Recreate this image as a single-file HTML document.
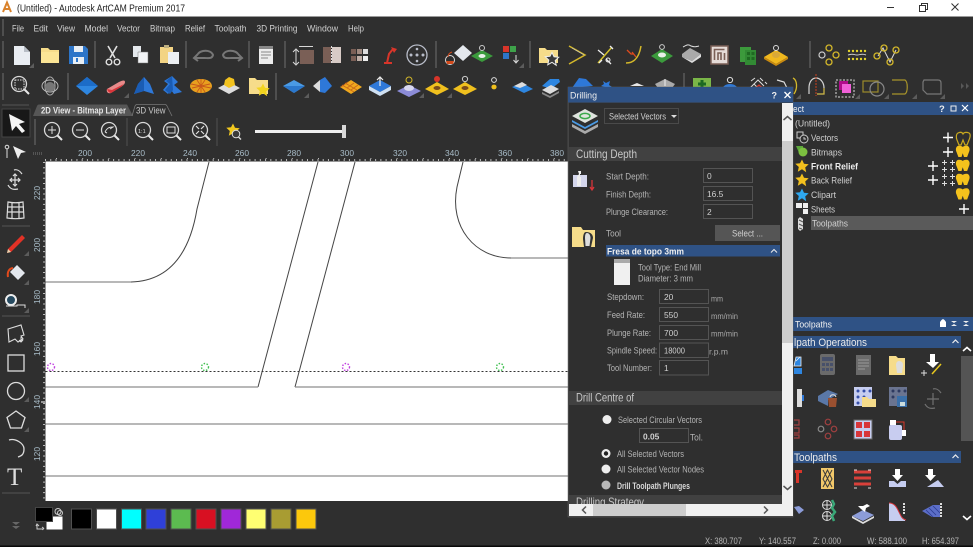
<!DOCTYPE html>
<html><head><meta charset="utf-8"><style>
html,body{margin:0;padding:0;background:#2f2f2f;overflow:hidden;width:973px;height:547px}
svg{display:block}
text{font-family:"Liberation Sans",sans-serif;font-size:9.4px;fill:#c4c4c4}
.m{font-size:9.4px;fill:#d0d0d0}
.l{font-size:9.4px;fill:#b4b4b4}
.n{font-size:8.4px;fill:#d0d0d0}
.u{font-size:8.4px;fill:#a8a8a8}
.h{font-size:12px;fill:#c8c8c8}
.w{fill:#f0f0f0}
.b{font-weight:bold}
.r{font-size:8.4px;fill:#a8bcc8}
.sep{stroke:#5a5a5a;stroke-width:1.5}
</style></head><body>
<svg width="973" height="547" viewBox="0 0 973 547" xmlns="http://www.w3.org/2000/svg">
<defs>
<g id="mag"><circle cx="-1" cy="-1" r="7.5" fill="none" stroke="#d8d8d8" stroke-width="1.300"/><path d="M4.500 4.500L9 9" stroke="#e8e8e8" stroke-width="2"/></g>
<path id="cor" d="M0 0l5 0 0 -5z" fill="#5c5c5c"/>
<g id="bulb"><path transform="scale(1.250)" d="M-4 -5c-2.500 0-3 3-2 5l1.500 4h2.500l1-3 1 3h2.500l1.500-4c1-2 .5-5-2-5-1.500 0-2.500 .5-3 1-.5-.5-1.500-1-3-1z" fill="#f4c21c"/></g>
<path id="star" d="M0-6.500l2 4.300 4.700 .5-3.500 3.200 1 4.700L0 3.300-4.200 5.700l1-4.700-3.500-3.200 4.700-.5z"/>
<path id="plus" d="M-5 0H5M0-5V5" stroke="#fff" stroke-width="1.400" fill="none"/>
<path id="pp" d="M-2.500 0H2.500M0-2.500V2.500" stroke="#ddd" stroke-width="1" fill="none"/>
<g id="pp4"><use href="#pp" x="-4" y="-3.500"/><use href="#pp" x="4" y="-3.500"/><use href="#pp" x="-4" y="3.500"/><use href="#pp" x="4" y="3.500"/></g>
<g id="ring"><circle r="3" fill="none" stroke="#d4b82a" stroke-width="1.300"/></g>
</defs>

<rect width="973" height="547" fill="#2f2f2f"/>
<!-- title -->
<rect width="973" height="16" fill="#fff"/><rect y="16" width="973" height="1" fill="#9a9a9a"/>
<path d="M3 12L7 2.500 11 12M5 9h4" fill="none" stroke="#d9822b" stroke-width="2"/>
<text x="17" y="11.500" textLength="168" lengthAdjust="spacingAndGlyphs" style="font-size:10px;fill:#222">(Untitled) - Autodesk ArtCAM Premium 2017</text>
<path d="M887 7.500h7" stroke="#333" stroke-width="1"/><path d="M919.500 5.500h6v6h-6zM921.500 5.500v-2h6v6h-2" fill="none" stroke="#333"/><path d="M951.500 3.500l7 7M958.500 3.500l-7 7" stroke="#333"/>
<!-- menu -->
<line x1="3" y1="19" x2="3" y2="36" class="sep"/>
<g>
<text class="m" x="12" y="31.500" textLength="12" lengthAdjust="spacingAndGlyphs">File</text><text class="m" x="33.500" y="31.500" textLength="14.500" lengthAdjust="spacingAndGlyphs">Edit</text><text class="m" x="57" y="31.500" textLength="18" lengthAdjust="spacingAndGlyphs">View</text><text class="m" x="84.500" y="31.500" textLength="23.500" lengthAdjust="spacingAndGlyphs">Model</text><text class="m" x="117" y="31.500" textLength="23" lengthAdjust="spacingAndGlyphs">Vector</text><text class="m" x="150" y="31.500" textLength="25" lengthAdjust="spacingAndGlyphs">Bitmap</text><text class="m" x="185" y="31.500" textLength="20" lengthAdjust="spacingAndGlyphs">Relief</text><text class="m" x="214.500" y="31.500" textLength="32" lengthAdjust="spacingAndGlyphs">Toolpath</text><text class="m" x="256.500" y="31.500" textLength="41" lengthAdjust="spacingAndGlyphs">3D Printing</text><text class="m" x="307" y="31.500" textLength="31" lengthAdjust="spacingAndGlyphs">Window</text><text class="m" x="348" y="31.500" textLength="16" lengthAdjust="spacingAndGlyphs">Help</text>
</g>

<!-- row 1 separators -->
<g class="sep"><line x1="3" y1="41" x2="3" y2="68"/><line x1="95" y1="41" x2="95" y2="68"/><line x1="186" y1="41" x2="186" y2="68"/><line x1="249" y1="41" x2="249" y2="68"/><line x1="285" y1="41" x2="285" y2="68"/><line x1="436" y1="41" x2="436" y2="68"/><line x1="530" y1="41" x2="530" y2="68"/><line x1="810" y1="41" x2="810" y2="68"/>
<line x1="3" y1="73" x2="3" y2="100"/><line x1="68" y1="73" x2="68" y2="100"/><line x1="276" y1="73" x2="276" y2="100"/><line x1="684" y1="73" x2="684" y2="100"/></g>

<!-- row 1 icons -->
<path d="M14 46h10l6 6v13H14z" fill="#e9edf2"/><path d="M24 46l6 6h-6z" fill="#b8bec6"/><use href="#cor" x="29" y="68"/>
<path d="M41 48h7l2 2h9v13H41z" fill="#f6dc8a"/><path d="M41 52h18v11H41z" fill="#fbe596"/>
<path d="M69 46h16l3 3v15H69z" fill="#2d75c8"/><rect x="74" y="46" width="9" height="6" fill="#e8eef4"/><rect x="73" y="57" width="11" height="7" fill="#e8eef4"/><rect x="76" y="58" width="2" height="4" fill="#2d75c8"/>
<path d="M108 46l7 12M117 46l-7 12" stroke="#e0e0e0" stroke-width="1.600"/><circle cx="109" cy="62" r="2.800" fill="none" stroke="#e0e0e0" stroke-width="1.400"/><circle cx="117" cy="62" r="2.800" fill="none" stroke="#e0e0e0" stroke-width="1.400"/>
<path d="M133 46h8v6h7v11h-10v-6h-5z" fill="#e4e8ec"/><path d="M138 52h10v11h-10z" fill="#f2f4f6" stroke="#777" stroke-width=".5"/>
<path d="M160 47h13v16h-13z" fill="#f3d484"/><rect x="164" y="45" width="5" height="3" fill="#bcae80"/><path d="M168 52h11v12h-11z" fill="#eceff2"/>
<path d="M198 54l-4 4 4 3M195 58h9c5 0 8 1 9-3-1-3-5-5-10-4-2 .5-4 1-5 3" fill="none" stroke="#777" stroke-width="2"/>
<path d="M238 54l4 4-4 3M241 58h-9c-5 0-8 1-9-3 1-3 5-5 10-4 2 .5 4 1 5 3" fill="none" stroke="#777" stroke-width="2"/>
<rect x="259" y="46" width="14" height="18" fill="#ececec"/><rect x="259" y="46" width="14" height="3" fill="#888"/><path d="M261 52h10M261 55h10M261 58h7" stroke="#888"/>
<rect x="300" y="50" width="14" height="14" fill="#7a5f56"/><path d="M296 50v14M293 52l3-3 3 3M293 62l3 3 3-3M299 46.500h14" stroke="#d8d8d8" fill="none"/>
<rect x="323" y="47" width="8" height="16" fill="#7a5f56"/><rect x="332" y="47" width="9" height="16" fill="#d8cbc6"/><path d="M331.500 46v18" stroke="#ddd" stroke-dasharray="2 1"/>
<g><rect x="351" y="49" width="5" height="5" fill="#7a5f56"/><rect x="357" y="49" width="5" height="5" fill="#a08a80"/><rect x="363" y="49" width="5" height="5" fill="#ddd"/><rect x="351" y="56" width="5" height="5" fill="#7a5f56"/><rect x="357" y="56" width="5" height="5" fill="#c0b0a8"/><rect x="363" y="56" width="5" height="5" fill="#eee"/></g>
<path d="M384 63h8M387 63l2-9 4-5" stroke="#d8352a" stroke-width="2" fill="none"/><path d="M391 47l6 2-3 4z" fill="#d8352a"/>
<circle cx="417" cy="55" r="10" fill="none" stroke="#b8bcc8" stroke-width="1.300"/><g fill="#b8bcc8"><circle cx="411" cy="55" r="1.500"/><circle cx="417" cy="55" r="1.500"/><circle cx="423" cy="55" r="1.500"/><circle cx="417" cy="49" r="1.300"/><circle cx="417" cy="61" r="1.300"/></g>
<path d="M454 53l9-8 9 8-9 8z" fill="#e4e8ee"/><circle cx="450" cy="60" r="4.500" fill="none" stroke="#ddd"/><path d="M446 61h8l-1 3h-6z" fill="#d24a1c"/><path d="M452 52c-3 1-4 3-4 5" stroke="#d24a1c" fill="none"/>
<path d="M482 50l11 6-11 6-11-6z" fill="#3b9a3c"/><ellipse cx="482" cy="56" rx="3.500" ry="2" fill="#e8f0e8"/><circle cx="482" cy="48" r="2.500" fill="none" stroke="#ccc"/>
<rect x="503" y="46" width="6" height="6" fill="#d8352a"/><rect x="510" y="46" width="6" height="6" fill="#3ea24a"/><rect x="503" y="53" width="6" height="6" fill="#2d75c8"/><path d="M516 55v7M513.500 60l2.500 3 2.500-3" stroke="#ddd" fill="none"/><use href="#cor" x="519" y="68"/>
<path d="M539 48h6l2 2h11v13h-19z" fill="#f6dc8a"/><use href="#star" x="552" y="59" fill="#3a3a3a" stroke="#eee"/>
<path d="M569 46l16 9-16 9" fill="none" stroke="#d4b82a" stroke-width="1.500"/><path d="M572 48l12 7" stroke="#ccc" stroke-width=".6"/>
<path d="M598 63l14-16" stroke="#d4c22a" stroke-width="1.500"/><path d="M598 50l6 5M606 59l5 5M599 63l3-3M610 46l3 3" stroke="#eee" stroke-width="1.300"/><circle cx="608" cy="60" r="2" fill="none" stroke="#eee"/>
<path d="M626 63c8 0 13-5 15-17" fill="none" stroke="#d4b82a" stroke-width="1.500"/><path d="M627 50l4 4 3 0M632 52l4 5" stroke="#e04a1c" stroke-width="1.300" fill="none"/>
<path d="M662 49l11 7-11 7-11-7z" fill="#3b9a3c"/><ellipse cx="662" cy="55" rx="4" ry="2.500" fill="#e8f0e8"/><circle cx="662" cy="47" r="2.400" fill="none" stroke="#ccc"/>
<path d="M682 54l8-6 11 6-9 7-10-4z" fill="#aaa"/><path d="M682 57l10 6 9-6v-3l-9 7-10-4z" fill="#ddd"/><path d="M683 47c4-2 5-3 8-1 3 1 4 1 8 0" stroke="#ddd" fill="none"/>
<rect x="711" y="46" width="17" height="18" fill="#e6dcd8" stroke="#7a5f56" stroke-width="1.500"/><path d="M714.500 60v-10.500h10M718 60v-7h3v7M724.500 53v7" stroke="#7a5f56" stroke-width="1.600" fill="none"/>
<rect x="740" y="47" width="11" height="15" fill="#3c9a3c"/><rect x="745" y="50" width="11" height="15" fill="#328a34"/><g fill="#1f6a22"><rect x="747" y="52" width="3" height="3"/><rect x="751.500" y="52" width="3" height="3"/><rect x="747" y="57" width="3" height="3"/><rect x="751.500" y="57" width="3" height="3"/></g>
<path d="M776 50l12 7-12 7-12-7z" fill="#f0b81e"/><path d="M764 57l12 7 12-7v2l-12 7-12-7z" fill="#c98a10"/><ellipse cx="776" cy="55" rx="4" ry="3" fill="#d8a838"/><circle cx="776" cy="48" r="2.500" fill="none" stroke="#ddd"/>
<circle cx="822" cy="55" r="3" fill="none" stroke="#ccc" stroke-width="1.200"/><use href="#ring" x="829" y="48"/><use href="#ring" x="836" y="55"/><use href="#ring" x="829" y="62"/>
<g fill="#e4d42a"><circle cx="849" cy="51" r="1.200"/><circle cx="853" cy="51" r="1.200"/><circle cx="857" cy="51" r="1.200"/><circle cx="861" cy="51" r="1.200"/><circle cx="865" cy="51" r="1.200"/><circle cx="849" cy="59" r="1.200"/><circle cx="853" cy="59" r="1.200"/><circle cx="857" cy="59" r="1.200"/><circle cx="861" cy="59" r="1.200"/><circle cx="865" cy="59" r="1.200"/></g><path d="M848 55c5-2 6 0 9 0s5-2 9 0" stroke="#ccc" fill="none"/>
<path d="M878 56l5-8 7 14 6-12" stroke="#ddd" fill="none"/><use href="#ring" x="877" y="56"/><use href="#ring" x="884" y="48"/><use href="#ring" x="890" y="62"/><use href="#ring" x="896" y="50"/>

<!-- row 2 icons -->
<use href="#mag" x="20" y="85"/><rect x="15" y="80" width="9" height="9" fill="none" stroke="#ddd" stroke-dasharray="1.500 1"/>
<ellipse cx="50" cy="86" rx="5" ry="9" fill="none" stroke="#aaa"/><ellipse cx="50" cy="86" rx="8" ry="6" fill="none" stroke="#bbb"/><circle cx="50" cy="87" r="5" fill="#777"/>
<path d="M87 77l11 9-11 9-11-9z" fill="#2e86e0"/><path d="M87 77l11 9-11 0-11 0z" fill="#1c6cc8"/>
<path d="M107 89l12-7c4-2 6-2 6 0s-2 4-6 6l-8 5c-3 1-5-1-4-4z" fill="#e88a8a"/><path d="M107 89c1 3 3 4 4 4l10-6 3-3-12 6z" fill="#d8353a"/><use href="#cor" x="124" y="98"/>
<path d="M144 77l6 7 4 10-10-3-10 3 4-10z" fill="#2e78d8"/><path d="M144 77l-6 7-4 10 10-3z" fill="#1a5cb4"/>
<path d="M172 76l6 6-4 3 8 7-8 2-3-4-3 4-5-4 5-6-4-3z" fill="#2e78d8"/><path d="M172 76l-6 5 4 3-5 6 5 4 3-4z" fill="#1a5cb4"/>
<ellipse cx="201" cy="86" rx="11" ry="7" fill="#e8a01e"/><path d="M191 84l20 4M192 88l18-4M197 80l8 12M205 80l-8 12M201 79v14" stroke="#c8581a" stroke-width=".9"/>
<path d="M229 82l11 6-11 6-11-6z" fill="#ddd"/><path d="M225 80l4-3 5 2 1 6-6 3-5-3z" fill="#f2c21e"/>
<path d="M249 78h6l2 2h11v14h-19z" fill="#f6dc8a"/><use href="#star" x="263" y="90" fill="#f2d41e"/>
<path d="M294 80l11 6-11 7-11-7z" fill="#4a9ae4"/><path d="M283 86l11 0 11 0-11 7z" fill="#2c78cc"/><use href="#cor" x="304" y="98"/>
<path d="M313 86l7-6v12z" fill="#ddd"/><path d="M320 80l5-3 7 9-7 7-5-1z" fill="#2e78d8"/>
<path d="M351 80l11 7-11 7-11-7z" fill="#f0a81e"/><path d="M345 83l12 7M342 85l12 7M348 82l-7 5M354 83l-7 5M358 85l-7 5" stroke="#c8681a" stroke-width=".8"/>
<path d="M380 80l11 6-11 6-11-6z" fill="#2e78d8"/><path d="M369 86l11 6 11-6v4l-11 6-11-6z" fill="#cfe0f2"/><path d="M380 86v-9M377 80l3-3 3 3" stroke="#eee" fill="none" stroke-width="1.200"/>
<path d="M409 85l12 6-12 6-12-6z" fill="#8c8cd8"/><ellipse cx="409" cy="88" rx="5" ry="3" fill="#d8d8f0"/><circle cx="409" cy="80" r="3" fill="none" stroke="#d4b82a"/><use href="#cor" x="419" y="98"/>
<path d="M437 82l12 7-12 6-12-6z" fill="#f0c01e"/><ellipse cx="437" cy="88" rx="3.500" ry="2" fill="#7a4b1c"/><circle cx="437" cy="79" r="3" fill="#d8352a"/><use href="#cor" x="447" y="98"/>
<path d="M465 82l12 7-12 6-12-6z" fill="#f0c01e"/><ellipse cx="465" cy="88" rx="3.500" ry="2" fill="#7a4b1c"/><circle cx="465" cy="79" r="2.600" fill="none" stroke="#ccc"/>
<circle cx="494" cy="80" r="2.400" fill="none" stroke="#ddd"/><ellipse cx="494" cy="87" rx="2.600" ry="2.400" fill="#f0c01e"/>
<path d="M512 87l10-4 11 6-9 4z" fill="#2e86e0"/><path d="M514 86l8-4 5 3-7 3z" fill="#ddd"/>
<path d="M542 86l8-7h9l1 3-9 7z" fill="#2e86e0"/><path d="M542 90l9-5 8 4-9 5z" fill="#ddd"/><path d="M542 92l8 4 9-5v2l-9 5-8-4z" fill="#888"/>
<path d="M572 88l7-10 7 1 7 7z" fill="#2e78d8"/><path d="M603 81l3 2 4-2-1 4 3 2h-4l-2 3-1-3-4-1 3-2z" fill="#2e78d8"/>
<path d="M630 86l7-3 7 3z" fill="#e8e8e8"/><path d="M655 84l10-5 10 5-3 4h-14z" fill="#aaa"/><path d="M665 79v7" stroke="#eee"/>
<rect x="693" y="78" width="18" height="12" fill="#7ab648"/><path d="M702 80v9M698 84h8" stroke="#1c6a22" stroke-width="3"/>
<circle cx="730" cy="80" r="2.600" fill="none" stroke="#ddd"/><path d="M722 91c0-5 4-7 8-7s8 2 8 7z" fill="#2e78d8"/>
<path d="M750 88l8-8 6 6M754 84l5 5M751 81l4-3M760 78l3 3M765 82l2 2" stroke="#ddd" fill="none"/><path d="M752 91l7-6 7 6" stroke="#d8352a" fill="none" stroke-width="1.200"/>
<path d="M777 80l7 2 3 6" stroke="#ddd" fill="none" stroke-width="1.200"/>
<path d="M793 78c4 2 5 10 1 16" stroke="#d4b82a" fill="none" stroke-width="1.300"/><use href="#cor" x="796" y="99"/>
<path d="M809 94v-6c0-6 3-10 7-10s8 4 8 10v6h-7" stroke="#d4d4d4" fill="none" stroke-width="1.200"/><path d="M816 74v22" stroke="#c8401c" stroke-dasharray="2 1"/><path d="M817 94h7v-6" stroke="#d4b82a" fill="none"/>
<rect x="836" y="80" width="18" height="17" fill="none" stroke="#ddd" stroke-dasharray="2 1.500"/><rect x="839" y="81" width="9" height="9" fill="#b00c8c"/><rect x="842" y="84" width="9" height="9" fill="#f060d8"/><use href="#cor" x="855" y="99"/>
<rect x="863" y="81" width="15" height="11" fill="none" stroke="#9c8a2a" stroke-width="1.200"/><circle cx="877" cy="89" r="7" fill="none" stroke="#888" stroke-width="1.200"/><use href="#cor" x="884" y="99"/>
<path d="M892 80h13c3 2 3 12 0 14h-13" fill="none" stroke="#a8942a" stroke-width="1.200"/><use href="#cor" x="912" y="99"/>
<path d="M924 80h14c2 0 3 1 3 3v11h-14l-4-4V82z" fill="none" stroke="#777" stroke-width="1.200"/><use href="#cor" x="940" y="99"/>
<path d="M961 83l3 3-3 3zM966 83l3 3-3 3z" fill="#585858"/>

<!-- tabs -->
<path d="M33 116l4-10c.5-1 1-1.500 2-1.500h88l6 11.500z" fill="#565656"/>
<path d="M132 116l3-10c.5-1 1-1.500 2-1.500h28c1 0 1.500 .5 2 1.500l5 10" fill="none" stroke="#777" stroke-width=".8"/>
<text x="41" y="113.500" class="b" textLength="85" lengthAdjust="spacingAndGlyphs" style="fill:#e6e6e6;font-size:9px">2D View - Bitmap Layer</text>
<text x="136" y="113.500" textLength="29.500" lengthAdjust="spacingAndGlyphs" style="fill:#c8c8c8">3D View</text>

<!-- view toolbar -->
<rect x="2" y="109" width="28" height="28" fill="#181818" stroke="#444"/>
<path d="M9 114l16 8-6 2 6 7-3 2-6-7-4 5z" fill="#f4f4f4"/>
<line x1="35" y1="119" x2="35" y2="145" class="sep"/><line x1="127" y1="118" x2="127" y2="146" stroke="#505050"/><line x1="217" y1="118" x2="217" y2="146" stroke="#505050"/>
<g><use href="#mag" x="53" y="131"/><path d="M48 130h8M52 126v8" stroke="#ddd"/>
<use href="#mag" x="81" y="131"/><path d="M76 130h8" stroke="#ddd"/>
<use href="#mag" x="110" y="131"/><path d="M105 132c2-4 4-5 8-5l-3 2M105 132l2 1" stroke="#ddd" fill="none"/>
<use href="#mag" x="144" y="131"/><text x="138" y="133" style="font-size:5.500px;fill:#ddd">1:1</text>
<use href="#mag" x="172" y="131"/><rect x="167" y="127" width="8" height="6" fill="none" stroke="#ddd"/>
<use href="#mag" x="201" y="131"/><path d="M196 126l3 3M204 126l-3 3M196 134l3-3M204 134l-3-3" stroke="#ddd" stroke-width="1.200"/></g>
<use href="#star" x="233" y="130" fill="#f2c81e"/><circle cx="236" cy="134" r="3.800" fill="#3a3a3a" stroke="#ddd"/><path d="M238.500 137l2.500 2.500" stroke="#ddd" stroke-width="1.300"/>
<rect x="255" y="130" width="88" height="3" fill="#eee"/><rect x="342" y="125" width="4" height="13" fill="#d8d8d8"/>

<!-- rulers -->
<g><text class="r" x="78" y="156">200</text><text class="r" x="131" y="156">220</text><text class="r" x="183" y="156">240</text><text class="r" x="235" y="156">260</text><text class="r" x="287" y="156">280</text><text class="r" x="340" y="156">300</text><text class="r" x="393" y="156">320</text><text class="r" x="445" y="156">340</text><text class="r" x="498" y="156">360</text><text class="r" x="550" y="156">380</text></g>
<path d="M33 153.500h10" stroke="#555" stroke-dasharray="1 1" stroke-width="3"/>
<line x1="45" y1="160" x2="568" y2="160" stroke="#bbb" stroke-width="2" stroke-dasharray="1 4.240"/>
<line x1="45" y1="158.500" x2="568" y2="158.500" stroke="#bbb" stroke-width="1" stroke-dasharray="1 25.200" stroke-dashoffset="-11"/>
<line x1="44" y1="162" x2="44" y2="501" stroke="#bbb" stroke-width="2" stroke-dasharray="1 4.240"/>
<g text-anchor="middle"><text class="r" transform="translate(40 193) rotate(-90)">220</text><text class="r" transform="translate(40 245) rotate(-90)">200</text><text class="r" transform="translate(40 297) rotate(-90)">180</text><text class="r" transform="translate(40 349) rotate(-90)">160</text><text class="r" transform="translate(40 402) rotate(-90)">140</text><text class="r" transform="translate(40 454) rotate(-90)">120</text></g>
<line x1="41" y1="402" x2="45" y2="402" stroke="#fff"/>

<!-- canvas -->
<rect x="45.500" y="161.500" width="523" height="339.500" fill="#fff"/>
<g fill="none" stroke="#444" stroke-width="1">
<path d="M209 162l-12 47c-8 48-30 72-66 73"/>
<path d="M318 162L258 387"/><path d="M355 162L295 387"/>
<path d="M463 162l-6 25c-8 40 18 71 54 71"/>
</g>
<g fill="none" stroke="#8e8e8e" stroke-width="1.300"><path d="M45.500 282H131M511 258H568M45.500 387H258M295 387H568M45.500 424H568M45.500 476H568"/></g>
<line x1="45.500" y1="371.500" x2="568" y2="371.500" stroke="#333" stroke-dasharray="2 2"/>
<g fill="none" stroke-dasharray="1.500 1.500" stroke-width="1.400"><g stroke="#c040e0"><circle cx="51" cy="367" r="3.500"/><circle cx="205" cy="367" r="3.500" stroke="#40c050"/><circle cx="346" cy="367" r="3.500"/><circle cx="500" cy="367" r="3.500" stroke="#40c050"/></g></g>

<!-- left toolbar -->
<path d="M2 105h27" stroke="#555"/>
<circle cx="7" cy="147" r="1.800" fill="none" stroke="#ddd"/><path d="M7 149v9" stroke="#ddd"/><path d="M13 146l13 6-5 1-3 6z" fill="#eee"/>
<g stroke="#ddd" fill="none" stroke-width="1.200"><path d="M8 185c2 4 6 5 10 4M22 174c-2-3-5-5-8-4"/><path d="M15 174v12M10 180h10M13 176l2-2 2 2M13 184l2 2 2-2M12 178l-2 2 2 2M18 178l2 2-2 2"/></g>
<path d="M8 202c5 1 10 1 15 0l1 16c-6 1-11 1-17 0zM12 202v16M19 202v16M7 207h17M7 212h17" fill="none" stroke="#ddd" stroke-width="1.200"/>
<path d="M2 226h28" stroke="#555"/>
<path d="M8 249l14-14 3 3-14 14-4 1z" fill="#e23226"/><path d="M7 253l1-4 3 3z" fill="#e8d4b0"/><use href="#cor" x="24" y="256"/>
<path d="M10 272l7-7 8 8-7 7z" fill="#e4e8ee"/><path d="M13 268c-4 .5-6 4-5 9" stroke="#e24a1c" stroke-width="2" fill="none"/><use href="#cor" x="24" y="285"/>
<circle cx="11" cy="300" r="5" fill="#264a60" stroke="#eee" stroke-width="2"/><path d="M6 306h11v-1h8v3" stroke="#ddd" fill="none"/><use href="#cor" x="24" y="313"/>
<path d="M2 316h28" stroke="#555"/>
<path d="M8 329l13-4 3 10-3 1 2 3-5 3-3-3-6 3z" fill="none" stroke="#ddd" stroke-width="1.100"/><path d="M21 337v5M19 340l2 2 2-2" stroke="#ddd" fill="none"/>
<rect x="8" y="355" width="16" height="16" fill="none" stroke="#ddd" stroke-width="1.300"/>
<circle cx="16" cy="391" r="8.500" fill="none" stroke="#ddd" stroke-width="1.300"/><use href="#cor" x="24" y="402"/>
<path d="M16 411l9 6.500-3.500 10.500h-11l-3.500-10.500z" fill="none" stroke="#ddd" stroke-width="1.300"/><use href="#cor" x="24" y="432"/>
<path d="M9 440c6-2 15 3 15 9s-3 7-6 8" fill="none" stroke="#ddd" stroke-width="1.300"/>
<text x="7" y="485" style="font-family:'Liberation Serif',serif;font-size:25px;fill:#ddd">T</text>
<path d="M2 493h28" stroke="#555"/>
<path d="M12 522l4 3 4-3zM12 526l4 3 4-3z" fill="#666"/>

<!-- swatches -->
<rect x="46.500" y="516.500" width="16" height="13" fill="#fff"/>
<rect x="35.500" y="507.500" width="17" height="14" fill="#000" stroke="#444"/>
<path d="M37 525v4h6M36 526l1-2 2 2M44 528l-1.500 2M42 527l2 1.500" stroke="#ccc" fill="none"/>
<circle cx="58" cy="511.500" r="3" fill="none" stroke="#ccc"/><circle cx="60" cy="513" r="2.500" fill="none" stroke="#ccc"/>
<g stroke="#505050">
<rect x="71.500" y="509" width="20" height="20" fill="#000"/><rect x="96.500" y="509" width="20" height="20" fill="#fff"/><rect x="121.500" y="509" width="20" height="20" fill="#00ffff"/><rect x="146" y="509" width="20" height="20" fill="#2f40d8"/><rect x="171" y="509" width="20" height="20" fill="#5cbb50"/><rect x="196" y="509" width="20" height="20" fill="#d81022"/><rect x="221" y="509" width="20" height="20" fill="#a028d8"/><rect x="246" y="509" width="20" height="20" fill="#ffff72"/><rect x="271" y="509" width="20" height="20" fill="#a89c32"/><rect x="296" y="509" width="20" height="20" fill="#fcc80c"/></g>

<!-- right panel -->
<rect x="793" y="102" width="180" height="13" fill="#2f5285"/>
<text x="793" y="112" class="w" textLength="11" lengthAdjust="spacingAndGlyphs">ect</text>
<text x="939" y="112" class="w b">?</text><rect x="951" y="106" width="5" height="5" fill="none" stroke="#eee"/><path d="M962 105l6 6M968 105l-6 6" stroke="#fff" stroke-width="1.200"/>
<rect x="811" y="216" width="162" height="14" fill="#5a5a5a"/>
<text x="795" y="126.500" class="m" textLength="35" lengthAdjust="spacingAndGlyphs">(Untitled)</text>
<text x="811" y="141" class="m" textLength="27" lengthAdjust="spacingAndGlyphs">Vectors</text><text x="811" y="155.500" class="m" textLength="31" lengthAdjust="spacingAndGlyphs">Bitmaps</text>
<text x="811" y="169.500" class="b" textLength="47" lengthAdjust="spacingAndGlyphs" style="fill:#eee">Front Relief</text>
<text x="811" y="183.500" class="m" textLength="41" lengthAdjust="spacingAndGlyphs">Back Relief</text><text x="811" y="198" class="m" textLength="25" lengthAdjust="spacingAndGlyphs">Clipart</text><text x="811" y="212.500" class="m" textLength="24" lengthAdjust="spacingAndGlyphs">Sheets</text>
<text x="812" y="226.500" class="m" textLength="36" lengthAdjust="spacingAndGlyphs">Toolpaths</text>
<rect x="797" y="132" width="6" height="6" fill="none" stroke="#ccc"/><circle cx="804" cy="139" r="4" fill="#2f2f2f" stroke="#ccc"/><path d="M804 137v2h2" stroke="#ccc" fill="none"/>
<path d="M796 146h7v6h-3v3z" fill="#5ca83c"/><circle cx="803" cy="152" r="4.500" fill="#7cc040"/>
<use href="#star" x="802" y="166" fill="#f2c01e"/><use href="#star" x="802" y="180" fill="#f2c01e"/><use href="#star" x="802" y="195" fill="#2ea8f0"/>
<rect x="796" y="203" width="6" height="5" fill="#eee"/><rect x="803" y="209" width="5" height="5" fill="#eee"/><rect x="803" y="203" width="5" height="5" fill="#eee"/>
<path d="M800 217l3 2v10l-3 2-2-2v-10z" fill="#ddd"/><path d="M799 220l4 2M799 224l4 2M799 228l3 1" stroke="#555"/>
<use href="#plus" x="948" y="137.500"/><path d="M958 133c2-1 4-1 5 1 1-2 4-2 6-1s1 5 0 7l-2 5h-2l-2-5-2 5h-2l-2-5c-1-2-1-6 1-7z" fill="none" stroke="#c8a81e" stroke-width="1.200"/>
<use href="#plus" x="948" y="152"/><use href="#plus" x="933" y="166"/><use href="#plus" x="933" y="180"/><use href="#pp4" x="948.500" y="166"/><use href="#pp4" x="948.500" y="180"/>
<use href="#bulb" x="964" y="152"/><use href="#bulb" x="964" y="166"/><use href="#bulb" x="964" y="180"/><use href="#bulb" x="964" y="194.500"/><use href="#plus" x="964" y="209"/>

<rect x="793" y="317" width="180" height="14" fill="#2f5285"/>
<text x="795" y="327.500" class="w" textLength="37" lengthAdjust="spacingAndGlyphs">Toolpaths</text>
<path d="M940 327h6v-5l-1.500-2-1.500-1-1.500 1-1.500 2z" fill="#fff"/><path d="M951 321h6l-3 2zM951 326h6l-3-2z" fill="#eee"/><path d="M963 321h6l-3 2zM963 326h6l-3-2z" fill="#eee"/>
<rect x="793" y="336" width="168" height="12" fill="#2f5285"/><rect x="793" y="451" width="168" height="12" fill="#2f5285"/>
<text x="794" y="346" textLength="73" lengthAdjust="spacingAndGlyphs" style="font-size:11px;fill:#eaeaea">lpath Operations</text>
<text x="794" y="461" textLength="43" lengthAdjust="spacingAndGlyphs" style="font-size:11px;fill:#eaeaea">Toolpaths</text>
<path d="M952.500 343l3-3 3 3M952.500 458l3-3 3 3" stroke="#eee" fill="none" stroke-width="1.200"/>
<rect x="961" y="356" width="12" height="85" fill="#545454"/>
<path d="M963 351l4-3.500 4 3.500M963 516l4 3.500 4-3.500" stroke="#fff" fill="none" stroke-width="1.600"/>

<!-- right icons -->
<path d="M796 357l5 0v9h-7zM796 361l4-4" fill="#2e86e0" stroke="#eee" stroke-width=".8"/><rect x="794" y="368" width="8" height="6" fill="#2e86e0"/>
<rect x="820" y="354" width="15" height="21" rx="2" fill="#6a6a6a"/><rect x="822" y="357" width="11" height="4" fill="#47506a"/><g fill="#47506a"><rect x="822" y="363" width="3" height="3"/><rect x="826" y="363" width="3" height="3"/><rect x="830" y="363" width="3" height="3"/><rect x="822" y="368" width="3" height="3"/><rect x="826" y="368" width="3" height="3"/><rect x="830" y="368" width="3" height="3"/></g>
<rect x="856" y="355" width="15" height="20" fill="#6a6a6a"/><path d="M858 360h11M858 363h11M858 366h11M858 369h7" stroke="#999"/>
<path d="M889 356h7l2 2h7v17h-16z" fill="#f6dc8a"/><path d="M899 361c3 0 4 2 4 4l-1 8h-5l-1-8c0-2 1-4 3-4z" fill="#ddd"/>
<rect x="930" y="354" width="5" height="8" fill="#fff"/><path d="M926 362l7 6 6-6z" fill="#fff"/><path d="M932 374l9-10" stroke="#e8c81e" stroke-width="1.500"/><path d="M924 370v6M921 373h6" stroke="#ddd"/>
<rect x="797" y="389" width="5" height="18" fill="#ddd"/><rect x="802" y="395" width="2" height="6" fill="#2e78d8"/>
<path d="M818 396l10-6 10 4-10 6v6l-10-5z" fill="#5a78a8"/><path d="M828 398h9l-1 9h-7z" fill="#9a5030"/><path d="M830 397c1-3 5-3 6 0" stroke="#ddd" fill="none"/>
<rect x="854" y="387" width="18" height="19" fill="#c6cdf0"/><g fill="#344ea8"><circle cx="858" cy="391" r="1.500"/><circle cx="864" cy="391" r="1.500"/><circle cx="870" cy="391" r="1.500"/><circle cx="858" cy="397" r="1.500"/><circle cx="864" cy="397" r="1.500"/><circle cx="858" cy="403" r="1.500"/></g><path d="M862 397h5l2 2h7v8h-14z" fill="#f6dc8a"/>
<rect x="889" y="387" width="18" height="19" fill="#6a7490"/><g fill="#2e3a60"><circle cx="893" cy="391" r="1.500"/><circle cx="899" cy="391" r="1.500"/><circle cx="905" cy="391" r="1.500"/><circle cx="893" cy="397" r="1.500"/></g><rect x="897" y="396" width="10" height="11" fill="#3a6fa8"/><rect x="900" y="402" width="5" height="4" fill="#cdd"/>
<g stroke="#707070" fill="none" stroke-width="1.200"><path d="M925 404c2 4 6 5 10 4M941 393c-2-3-5-5-8-4"/><path d="M933 393v12M927 399h12"/></g>
<path d="M794 420h5v5h-5M794 428h5v5h-5M794 435h5v3h-5" stroke="#a04040" fill="none" stroke-width="1.300"/>
<g fill="none" stroke-width="1.200"><circle cx="821" cy="429" r="2.800" stroke="#888"/><circle cx="828" cy="422" r="2.800" stroke="#a04040"/><circle cx="834" cy="429" r="2.800" stroke="#a04040"/><circle cx="828" cy="436" r="2.800" stroke="#a04040"/></g>
<rect x="854" y="420" width="18" height="19" fill="#c6cdf0" stroke="#666"/><path d="M856 422h6v6h-6zM864 422h6v6h-6zM856 431h6v6h-6zM864 431h6v6h-6z" fill="#d8353a"/>
<rect x="889" y="425" width="13" height="15" rx="2" fill="#c8cdf0"/><rect x="890" y="420" width="6" height="5" fill="#fff"/><path d="M896 422h8v8" stroke="#d8352a" fill="none"/><rect x="902" y="430" width="4" height="6" fill="#fff"/>
<path d="M795 470h7v3h-3v10h-3v-10h-1z" fill="#d8352a"/>
<rect x="821" y="468" width="13" height="21" fill="#f2c86a"/><path d="M823 470l9 17M832 470l-9 17M823 479l4.500-9 4.500 9-4.500 8z" stroke="#3a3a3a" fill="none"/>
<path d="M854 472h17M854 478h17M854 484h17" stroke="#d8403a" stroke-width="3"/><path d="M854 470h3M868 470h3M854 488h3M868 488h3" stroke="#ddd"/>
<path d="M895 469h5v6h3l-5.500 6-5.500-6h3z" fill="#fff"/><path d="M889 481h5l3.500 3 3.500-3h5v6h-17z" fill="#c6cdf0"/>
<path d="M928 469h5v6h3l-5.500 6-5.500-6h3z" fill="#fff"/><path d="M927 487l11-7 6 7z" fill="#c6cdf0"/>
<path d="M794 507l5-1 5 4-5 4z" fill="#8c9cd8"/>
<circle cx="827" cy="505" r="4.500" fill="none" stroke="#ddd"/><path d="M822.500 505h9M827 500.500v9" stroke="#ddd"/><circle cx="827" cy="516" r="4.500" fill="none" stroke="#ddd"/><path d="M822.500 516h9M827 511.500v9" stroke="#ddd"/><path d="M832 500l2 4-2 4 3 4-3 4 2 5" stroke="#3aa878" stroke-width="2.500" fill="none"/>
<path d="M863 510l11 5-11 6-11-5z" fill="#8c9cd8"/><path d="M852 516l11 6 11-6v2l-11 6-11-6z" fill="#ddd"/><path d="M858 506h5l4-2 3 2-4 2-1 4-4-3z" fill="#fff"/>
<path d="M889 521v-18c5 0 8 4 10 9s3 7 6 8v1z" fill="#c6cdf0"/><path d="M889 503c6 0 8 5 10 9s3 7 7 8" stroke="#d8353a" fill="none"/><path d="M904 503v11" stroke="#ddd" stroke-width="2" stroke-dasharray="2 1"/>
<path d="M922 511l11-6h7v12h-8z" fill="#5c6ec8"/><path d="M926 510l7 7M929 508l7 7M933 506l7 7" stroke="#2c3c90" stroke-width=".8"/><path d="M941 503v14" stroke="#ddd" stroke-width="2" stroke-dasharray="2 1"/>

<!-- status -->
<g><text x="705" y="544" class="l" textLength="37" lengthAdjust="spacingAndGlyphs">X: 380.707</text><text x="759" y="544" class="l" textLength="37" lengthAdjust="spacingAndGlyphs">Y: 140.557</text><text x="813" y="544" class="l" textLength="28" lengthAdjust="spacingAndGlyphs">Z: 0.000</text><text x="867" y="544" class="l" textLength="40" lengthAdjust="spacingAndGlyphs">W: 588.100</text><text x="922" y="544" class="l" textLength="37" lengthAdjust="spacingAndGlyphs">H: 654.397</text></g>
<rect y="545.500" width="973" height="1.500" fill="#0a0a0a"/>

<!-- dialog -->
<rect x="568" y="87" width="225" height="430" fill="#3a3a3a" stroke="#666" stroke-width=".5"/>
<rect x="568" y="87" width="225" height="15.500" fill="#2f5285"/>
<text x="570" y="98.500" class="w" textLength="27" lengthAdjust="spacingAndGlyphs">Drilling</text>
<text x="771.500" y="98.500" class="w b" style="font-size:9px">?</text><path d="M784.500 92l6 6M790.500 92l-6 6" stroke="#fff" stroke-width="1.300"/>
<rect x="569" y="103" width="213" height="401" fill="#2f2f2f"/>
<rect x="782" y="103" width="11" height="401" fill="#f0f0f0"/><rect x="782" y="141" width="11" height="202" fill="#cdcdcd"/>
<path d="M783.500 120l4-3.500 4 3.500M783.500 486l4 3.500 4-3.500" stroke="#555" fill="none" stroke-width="1.500"/>
<rect x="569" y="504" width="224" height="12" fill="#f0f0f0"/><rect x="593" y="504" width="93" height="12" fill="#cdcdcd"/>
<path d="M586 506.500l-3.500 3.500 3.500 3.500M764 506.500l3.500 3.500-3.500 3.500" stroke="#555" fill="none" stroke-width="1.500"/>
<!-- drill header -->
<path d="M585 109l13 7-13 7-13-7z" fill="#dfe4de"/><ellipse cx="585" cy="116" rx="5" ry="2.600" fill="none" stroke="#3aa84a" stroke-width="1.500"/><path d="M572 120l13 7 13-7v2l-13 7-13-7z" fill="#4a9ae4"/><path d="M572 124l13 7 13-7v3l-13 7-13-7z" fill="#aaa"/>
<rect x="604.500" y="108.500" width="74" height="15" fill="#2f2f2f" stroke="#4a4a4a"/>
<text x="609" y="119.500" class="m" textLength="57" lengthAdjust="spacingAndGlyphs">Selected Vectors</text><path d="M671 115h6l-3 3z" fill="#ddd"/>
<!-- cutting depth -->
<rect x="569" y="147" width="213" height="14" fill="#414141"/><text x="576" y="158" class="h" textLength="61" lengthAdjust="spacingAndGlyphs">Cutting Depth</text>
<path d="M573 175v12h14v-12" fill="#d4d6ec"/><path d="M578 171h3v3h-1v3h1v9h-4v-9l2-3z" fill="#eee"/><path d="M592 180v9M590 187l2 3 2-3" stroke="#d8353a" stroke-width="1.300" fill="none"/>
<text x="606" y="179.500" class="l" textLength="43" lengthAdjust="spacingAndGlyphs">Start Depth:</text><text x="606" y="197.500" class="l" textLength="45" lengthAdjust="spacingAndGlyphs">Finish Depth:</text><text x="606" y="215" class="l" textLength="62" lengthAdjust="spacingAndGlyphs">Plunge Clearance:</text>
<g fill="none" stroke="#545454"><rect x="703.500" y="168.500" width="49" height="14"/><rect x="703.500" y="186.500" width="49" height="14"/><rect x="703.500" y="204.500" width="49" height="14"/>
<rect x="659.500" y="289.500" width="49" height="14"/><rect x="659.500" y="307.500" width="49" height="14"/><rect x="659.500" y="325.500" width="49" height="14"/><rect x="659.500" y="343" width="49" height="14.500"/><rect x="659.500" y="360.500" width="49" height="14.500"/><rect x="639.500" y="428.500" width="49" height="14"/></g>
<text x="707" y="179" class="n">0</text><text x="707" y="197" class="n">16.5</text><text x="707" y="215" class="n">2</text>
<!-- tool -->
<path d="M572 227h9l2 3h12v17h-23z" fill="#f6dc8a"/><path d="M586 232c5 0 7 3 7 6l-2 9h-7l-1-8c0-4 1-7 3-7z" fill="#333"/><path d="M587 233c2.500 0 3.500 3 3.500 5l-1 8h-4l-.5-8c0-3 .5-5 2-5z" fill="#ddd"/>
<text x="606" y="236.500" class="l" textLength="15" lengthAdjust="spacingAndGlyphs">Tool</text>
<rect x="715" y="225" width="65" height="16" fill="#555"/><text x="732" y="236.500" class="m" textLength="31" lengthAdjust="spacingAndGlyphs">Select ...</text>
<rect x="606" y="245" width="174" height="11.500" fill="#2f5285"/><text x="607" y="254.500" class="w b" textLength="77" lengthAdjust="spacingAndGlyphs">Fresa de topo 3mm</text>
<path d="M771 252.500l3-3 3 3" stroke="#eee" fill="none"/>
<rect x="614" y="259" width="16" height="26" fill="#f0f0f0"/><rect x="614" y="259" width="16" height="4" fill="#aaa"/>
<text x="638" y="270.500" class="l" textLength="63" lengthAdjust="spacingAndGlyphs">Tool Type: End Mill</text><text x="638" y="281.500" class="l" textLength="55" lengthAdjust="spacingAndGlyphs">Diameter:  3 mm</text>
<text x="607" y="300" class="l" textLength="37" lengthAdjust="spacingAndGlyphs">Stepdown:</text><text x="607" y="318" class="l" textLength="38" lengthAdjust="spacingAndGlyphs">Feed Rate:</text><text x="607" y="336" class="l" textLength="44" lengthAdjust="spacingAndGlyphs">Plunge Rate:</text><text x="607" y="353.500" class="l" textLength="50" lengthAdjust="spacingAndGlyphs">Spindle Speed:</text><text x="607" y="371" class="l" textLength="45" lengthAdjust="spacingAndGlyphs">Tool Number:</text>
<text x="664" y="300" class="n">20</text><text x="664" y="318" class="n">550</text><text x="664" y="336" class="n">700</text><text x="664" y="353.500" class="n" textLength="21" lengthAdjust="spacingAndGlyphs">18000</text><text x="664" y="371" class="n">1</text>
<text x="711" y="301.500" class="u" textLength="12" lengthAdjust="spacingAndGlyphs">mm</text><text x="711" y="319" class="u" textLength="27" lengthAdjust="spacingAndGlyphs">mm/min</text><text x="711" y="336.500" class="u" textLength="27" lengthAdjust="spacingAndGlyphs">mm/min</text><text x="709" y="354.500" class="u" textLength="19" lengthAdjust="spacingAndGlyphs">r.p.m</text>
<!-- centre -->
<rect x="569" y="391" width="213" height="14" fill="#414141"/><text x="576" y="401.500" class="h" textLength="58" lengthAdjust="spacingAndGlyphs">Drill Centre of</text>
<circle cx="607" cy="419.500" r="4.500" fill="#eee"/><text x="618" y="423" class="l" textLength="84" lengthAdjust="spacingAndGlyphs">Selected Circular Vectors</text>
<text x="643" y="439.500" class="n b">0.05</text><text x="690" y="440.500" class="l" textLength="13" lengthAdjust="spacingAndGlyphs">Tol.</text>
<circle cx="606" cy="453.500" r="4.500" fill="#eee"/><circle cx="606" cy="453.500" r="2.200" fill="#222"/><text x="617" y="457" class="l" textLength="67" lengthAdjust="spacingAndGlyphs">All Selected Vectors</text>
<circle cx="606" cy="469" r="4.500" fill="#eee"/><text x="617" y="472.500" class="l" textLength="87" lengthAdjust="spacingAndGlyphs">All Selected Vector Nodes</text>
<circle cx="606" cy="485" r="4.500" fill="#b8b8b8"/><text x="617" y="489" class="b" textLength="73" lengthAdjust="spacingAndGlyphs" style="font-size:9px;fill:#d8d8d8">Drill Toolpath Plunges</text>
<rect x="569" y="495" width="213" height="9" fill="#414141"/>
<svg x="569" y="495" width="213" height="9"><text x="7" y="11" class="h" textLength="68" lengthAdjust="spacingAndGlyphs">Drilling Strategy</text></svg>
</svg>
</body></html>
